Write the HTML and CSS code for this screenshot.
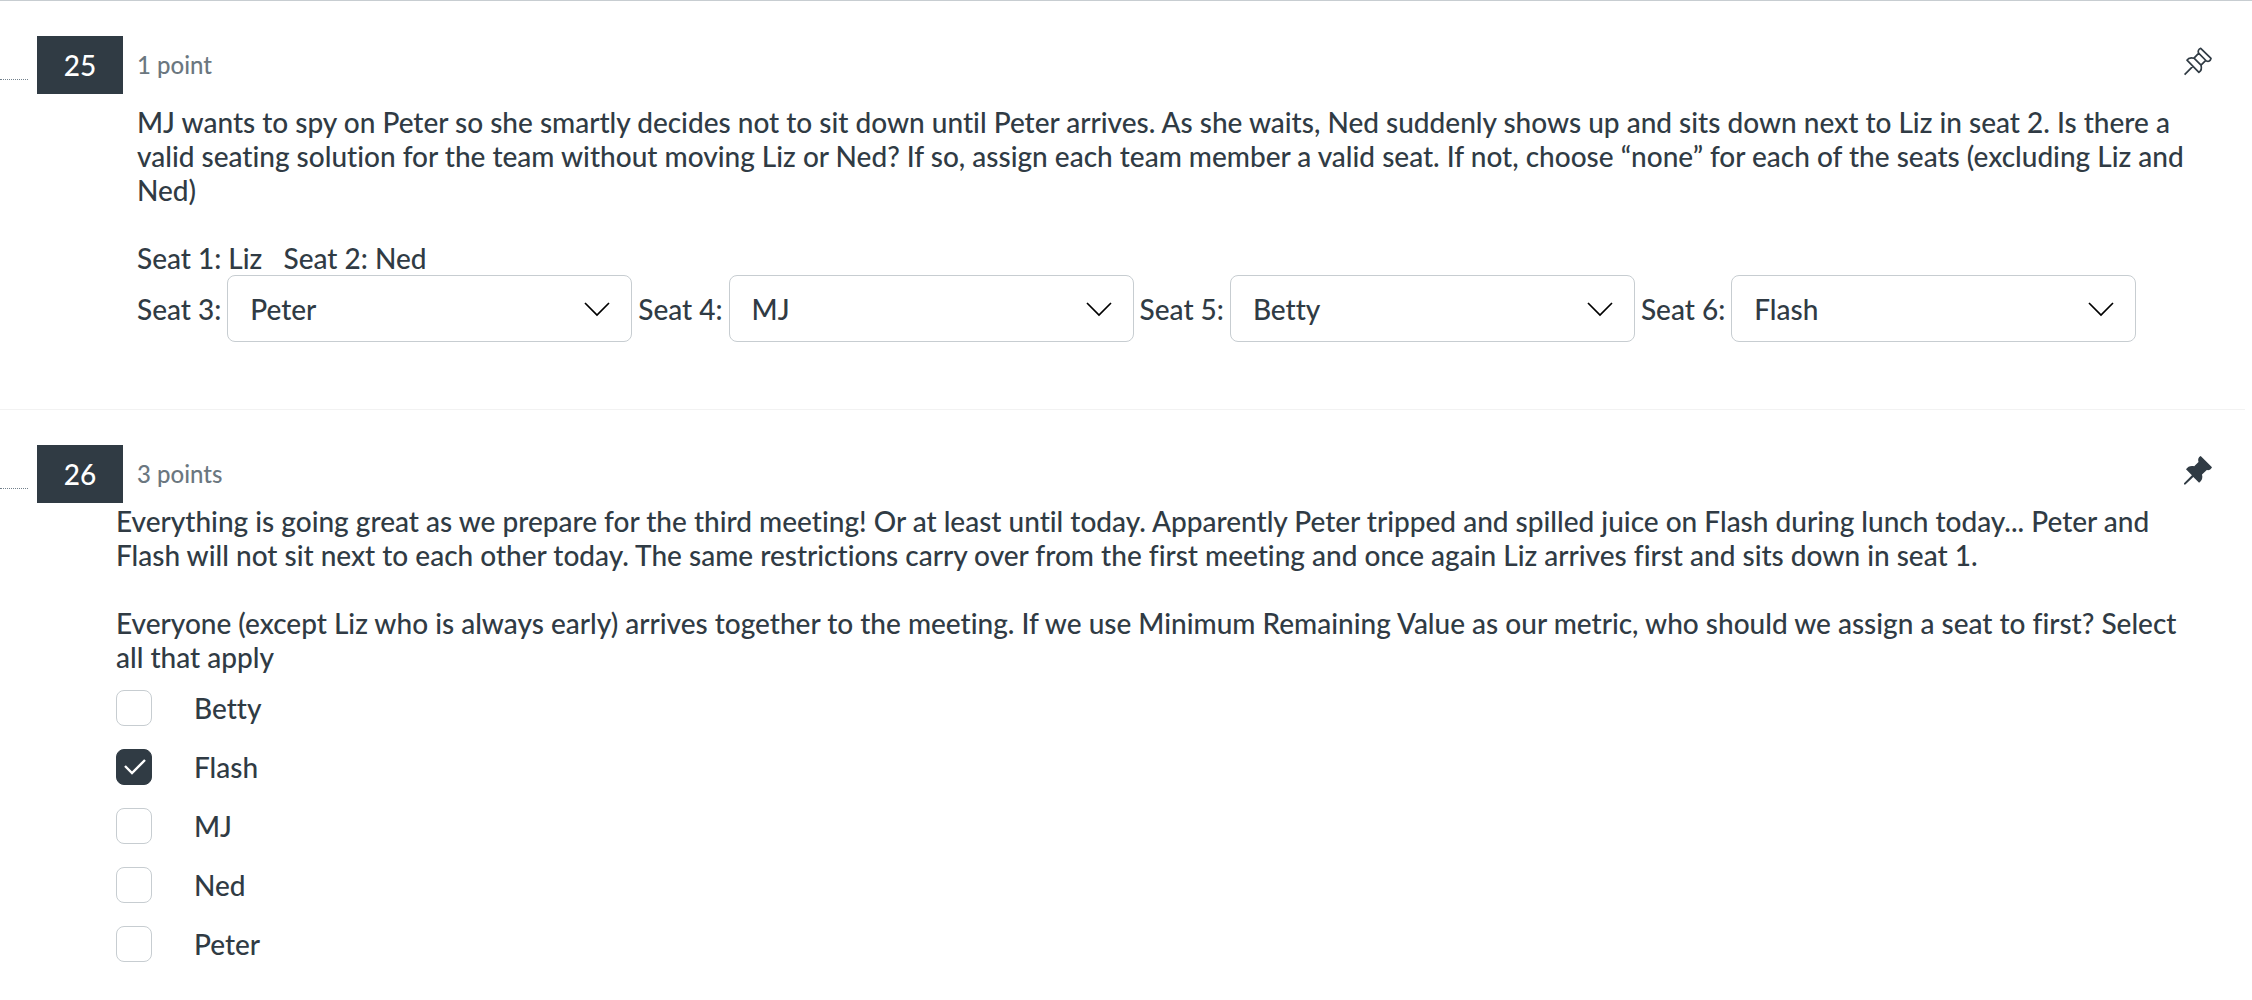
FILE: index.html
```
<!DOCTYPE html>
<html lang="en">
<head>
<meta charset="utf-8">
<meta name="viewport" content="width=device-width, initial-scale=1">
<title>Quiz</title>
<link rel="stylesheet" href="styles.css">
</head>
<body>
<main class="quiz">
  <section class="question">
    <header class="question-header">
      <span class="connector"></span>
      <h2 class="number">25</h2>
      <span class="points">1 point</span>
      <button class="pin" type="button" aria-label="Pin question 25">
        <svg width="28" height="28" viewBox="0 0 28 28" fill="none" stroke="currentColor" stroke-width="1.700" stroke-linejoin="round"><path d="M16.700 1.300L27 11.400c-.8 2.600-2.200 3.400-4.600 2.600L14.600 6.200C13.600 4.200 14.600 2 16.700 1.300zM14.800 6.200L10 11.200M21.800 13.400L17 18.200M3 13.200c1.500-2.600 4.300-2.700 7-2L17 18.200c.9 2.800.3 5.400-2.100 7.200zM8.800 19.400L.6 27.600"/></svg>
      </button>
    </header>
    <div class="body">
      <p class="prompt">MJ wants to spy on Peter so she smartly decides not to sit down until Peter arrives. As she waits, Ned suddenly shows up and sits down next to Liz in seat 2. Is there a valid seating solution for the team without moving Liz or Ned? If so, assign each team member a valid seat. If not, choose “none” for each of the seats (excluding Liz and Ned)</p>
      <p class="prompt">Seat 1: Liz &nbsp;&nbsp;Seat 2: Ned</p>
      <div class="seats">
        <div class="seat">
          <label for="seat3">Seat 3:</label>
          <span class="select"><select id="seat3"><option>Peter</option></select><svg class="chevron" width="26" height="15" viewBox="0 0 26 15"><path d="M1 1l12 12L25 1" fill="none" stroke="#000" stroke-width="1.700"/></svg></span>
        </div>
        <div class="seat">
          <label for="seat4">Seat 4:</label>
          <span class="select"><select id="seat4"><option>MJ</option></select><svg class="chevron" width="26" height="15" viewBox="0 0 26 15"><path d="M1 1l12 12L25 1" fill="none" stroke="#000" stroke-width="1.700"/></svg></span>
        </div>
        <div class="seat">
          <label for="seat5">Seat 5:</label>
          <span class="select"><select id="seat5"><option>Betty</option></select><svg class="chevron" width="26" height="15" viewBox="0 0 26 15"><path d="M1 1l12 12L25 1" fill="none" stroke="#000" stroke-width="1.700"/></svg></span>
        </div>
        <div class="seat">
          <label for="seat6">Seat 6:</label>
          <span class="select"><select id="seat6"><option>Flash</option></select><svg class="chevron" width="26" height="15" viewBox="0 0 26 15"><path d="M1 1l12 12L25 1" fill="none" stroke="#000" stroke-width="1.700"/></svg></span>
        </div>
      </div>
    </div>
  </section>
  <section class="question">
    <header class="question-header">
      <span class="connector"></span>
      <h2 class="number">26</h2>
      <span class="points">3 points</span>
      <button class="pin" type="button" aria-label="Unpin question 26" aria-pressed="true">
        <svg width="28" height="28" viewBox="0 0 28 28" fill="currentColor"><path d="M16.700 0L28 11.300c-1.200 2.300-3 3.200-5.200 2.700L18 18.500c.9 3.300.2 6-2.900 8.300L9.300 21 1.400 28.600H0v-1.400L7.900 19.300 2 13.300c1.800-2.900 4.700-3.900 8.200-3.100L14.500 6C13.700 3.300 14.300 1.200 16.700 0z"/></svg>
      </button>
    </header>
    <fieldset class="body body-wide">
      <p class="prompt">Everything is going great as we prepare for the third meeting! Or at least until today. Apparently Peter tripped and spilled juice on Flash during lunch today... Peter and Flash will not sit next to each other today. The same restrictions carry over from the first meeting and once again Liz arrives first and sits down in seat 1.</p>
      <p class="prompt">Everyone (except Liz who is always early) arrives together to the meeting. If we use Minimum Remaining Value as our metric, who should we assign a seat to first? Select all that apply</p>
      <div class="answers">
        <label class="answer"><input type="checkbox">Betty</label>
        <label class="answer"><input type="checkbox" checked>Flash</label>
        <label class="answer"><input type="checkbox">MJ</label>
        <label class="answer"><input type="checkbox">Ned</label>
        <label class="answer"><input type="checkbox">Peter</label>
      </div>
    </fieldset>
  </section>
</main>
</body>
</html>
```
FILE: styles.css
```
* { box-sizing: border-box; }

body {
  margin: 0;
  background: #fff;
  color: #303b44;
  font: 500 28px/34px Lato, sans-serif;
  font-variant-ligatures: no-common-ligatures;
}

.quiz { border-top: 1px solid #c7cdd1; }

.question {
  margin-right: 7px;
  padding: 35px 33px 0 0;
}

.question + .question { border-top: 1px solid #f2f2f2; }

.question-header {
  display: flex;
  align-items: center;
  height: 58px;
}

.connector {
  width: 28px;
  margin: 28px 9px 0 0;
  border-top: 1px dotted #73818c;
}

.number {
  width: 86px;
  margin: 0 14px 0 0;
  background: #303b44;
  color: #fff;
  font-size: 28px;
  font-weight: 500;
  line-height: 58px;
  text-align: center;
}

.points {
  color: #6b7780;
  font-size: 24px;
}

.pin {
  display: flex;
  align-self: flex-start;
  margin: 11px 0 0 auto;
  padding: 0;
  border: 0;
  background: none;
  color: #303b44;
}

.pin svg { overflow: visible; }

.body {
  min-width: 0;
  margin: 0;
  padding: 11px 8px 67px 137px;
  border: 0;
}

.body-wide { padding: 1px 8px 36px 116px; }

.prompt { margin: 0 0 34px; }

.seats {
  display: flex;
  flex-wrap: wrap;
  column-gap: 6px;
  margin-top: -34px;
}

.seat {
  display: flex;
  align-items: center;
  gap: 6px;
}

.select { position: relative; }

select {
  display: block;
  appearance: none;
  width: 405px;
  height: 67px;
  padding: 0 22px;
  border: 1px solid #c7cdd1;
  border-radius: 8px;
  background: #fff;
  color: inherit;
  font: inherit;
}

.chevron {
  position: absolute;
  top: 27px;
  right: 22px;
  pointer-events: none;
}

.answers {
  display: grid;
  gap: 23px;
  margin-top: -18px;
}

.answer {
  display: flex;
  align-items: center;
  gap: 42px;
  height: 36px;
}

input[type="checkbox"] {
  appearance: none;
  width: 36px;
  height: 36px;
  margin: 0;
  border: 1px solid #c7cdd1;
  border-radius: 8px;
  background: #fff;
}

input[type="checkbox"]:checked {
  border-color: #303b44;
  background: #303b44 url("data:image/svg+xml,%3Csvg xmlns='http://www.w3.org/2000/svg' viewBox='0 0 34 34'%3E%3Cpath d='M8 16l7 7L28 10' fill='none' stroke='%23fff' stroke-width='2.400'/%3E%3C/svg%3E") center / 34px no-repeat;
}
```
